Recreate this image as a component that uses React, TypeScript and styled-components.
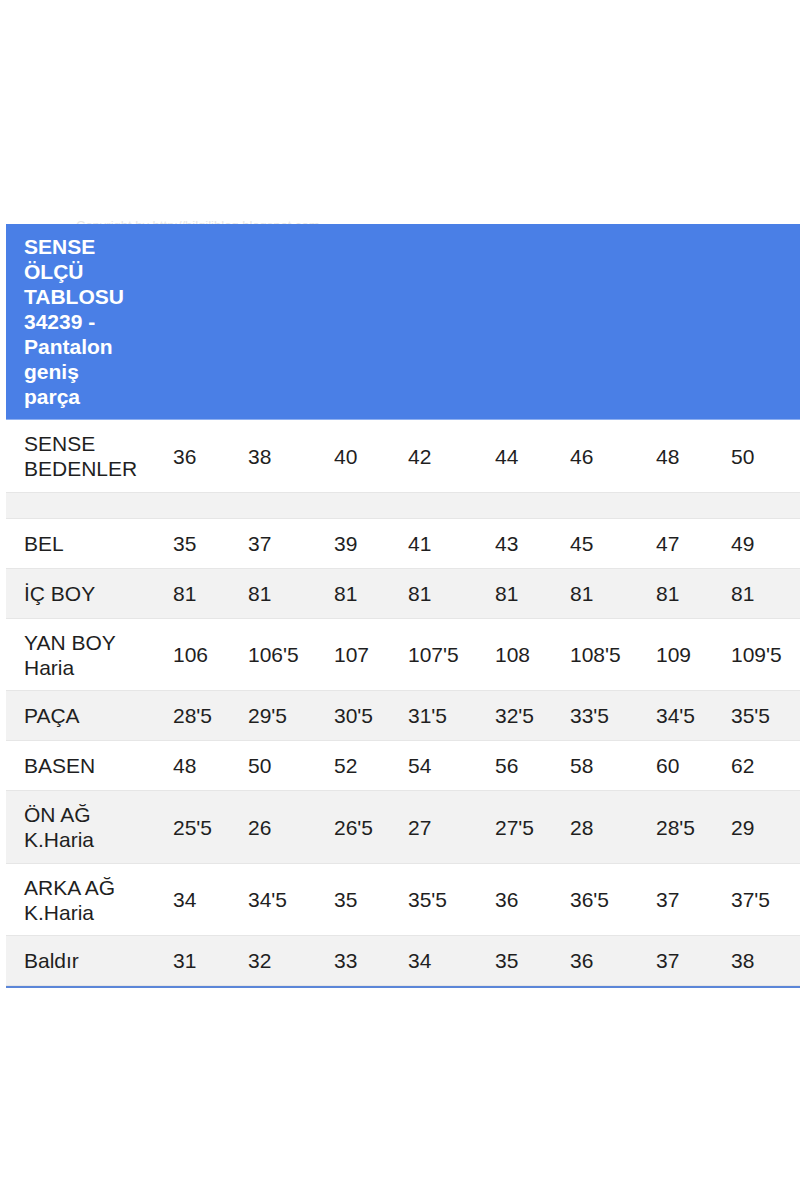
import React from 'react';
import styled, { createGlobalStyle } from 'styled-components';

const GlobalStyle = createGlobalStyle`
  html, body {
    margin: 0;
    padding: 0;
    background: #ffffff;
  }
  body {
    font-family: 'Liberation Sans', Arial, sans-serif;
    color: #222222;
  }
`;

const sizes = ['36', '38', '40', '42', '44', '46', '48', '50'];

const rows: { label: string[]; values: string[] }[] = [
  { label: ['BEL'], values: ['35', '37', '39', '41', '43', '45', '47', '49'] },
  { label: ['İÇ BOY'], values: ['81', '81', '81', '81', '81', '81', '81', '81'] },
  {
    label: ['YAN BOY', 'Haria'],
    values: ['106', "106'5", '107', "107'5", '108', "108'5", '109', "109'5"],
  },
  {
    label: ['PAÇA'],
    values: ["28'5", "29'5", "30'5", "31'5", "32'5", "33'5", "34'5", "35'5"],
  },
  { label: ['BASEN'], values: ['48', '50', '52', '54', '56', '58', '60', '62'] },
  {
    label: ['ÖN AĞ', 'K.Haria'],
    values: ["25'5", '26', "26'5", '27', "27'5", '28', "28'5", '29'],
  },
  {
    label: ['ARKA AĞ', 'K.Haria'],
    values: ['34', "34'5", '35', "35'5", '36', "36'5", '37', "37'5"],
  },
  { label: ['Baldır'], values: ['31', '32', '33', '34', '35', '36', '37', '38'] },
];

const App: React.FC = () => {
  return (
    <>
      <GlobalStyle />
      <Page>
        <Watermark>
          <span>Copyright by http://bilgiliblog.blogspot.com</span>
        </Watermark>
        <SizeTable>
          <TitleBar>
            <Title>SENSE ÖLÇÜ TABLOSU 34239 - Pantalon geniş parça</Title>
          </TitleBar>

          <Row $striped={false}>
            <LabelCell>
              SENSE
              <br />
              BEDENLER
            </LabelCell>
            {sizes.map((s) => (
              <ValueCell key={`size-${s}`}>{s}</ValueCell>
            ))}
          </Row>

          <SpacerRow />

          {rows.map((row, index) => (
            <Row key={row.label.join('-')} $striped={index % 2 === 1}>
              <LabelCell>
                {row.label.map((line, i) => (
                  <React.Fragment key={line}>
                    {i > 0 && <br />}
                    {line}
                  </React.Fragment>
                ))}
              </LabelCell>
              {row.values.map((v, i) => (
                <ValueCell key={`${row.label[0]}-${i}`}>{v}</ValueCell>
              ))}
            </Row>
          ))}
        </SizeTable>
      </Page>
    </>
  );
};

const Page = styled.div`
  width: 800px;
  height: 1200px;
  padding-top: 212px;
  box-sizing: border-box;
  overflow: hidden;
`;

const Watermark = styled.div`
  height: 12px;
  overflow: hidden;
  padding-left: 76px;
  span {
    display: block;
    font-size: 13px;
    line-height: 20px;
    margin-top: 4px;
    color: #e6e6e6;
    white-space: nowrap;
  }
`;

const SizeTable = styled.div`
  margin-left: 6px;
  width: 794px;
  border-bottom: 2px solid #5b86d8;
`;

const TitleBar = styled.div`
  background-color: #4a7fe6;
  padding: 10px 0 10px 18px;
  border-bottom: 1px solid #8fb0f0;
`;

const Title = styled.div`
  width: 108px;
  color: #ffffff;
  font-weight: 700;
  font-size: 21px;
  line-height: 25px;
`;

const Row = styled.div<{ $striped: boolean }>`
  display: grid;
  grid-template-columns: 167px 75px 86px 74px 87px 75px 86px 75px 1fr;
  align-items: center;
  min-height: 50px;
  box-sizing: border-box;
  padding: 11px 0 10.5px;
  background-color: ${({ $striped }) => ($striped ? '#f2f2f2' : '#ffffff')};
  border-bottom: 1px solid #e6e6e6;
  font-size: 21px;
  line-height: 25px;
  color: #1f1f1f;
`;

const SpacerRow = styled.div`
  height: 26px;
  box-sizing: border-box;
  background-color: #f2f2f2;
  border-bottom: 1px solid #e6e6e6;
`;

const LabelCell = styled.div`
  padding-left: 18px;
`;

const ValueCell = styled.div`
  white-space: nowrap;
`;

export default App;
